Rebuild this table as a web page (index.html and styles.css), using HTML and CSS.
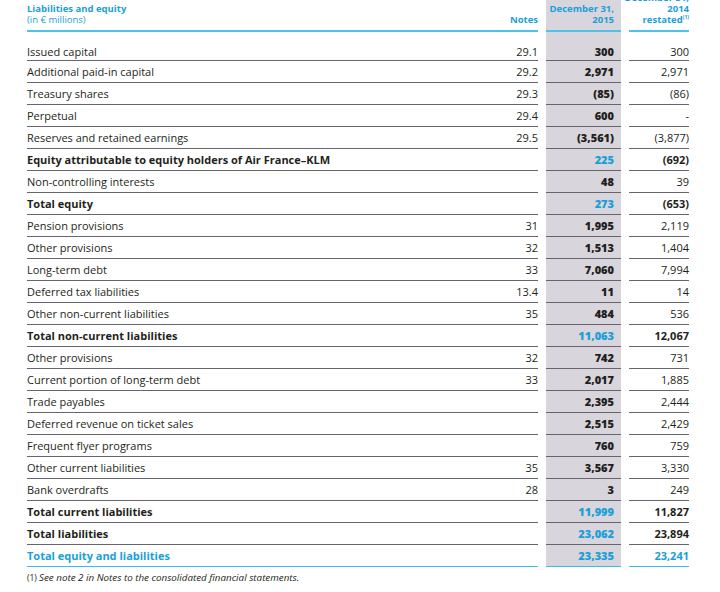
FILE: index.html
```html
<!DOCTYPE html>
<html>
<head>
<meta charset="utf-8">
<link rel="stylesheet" href="styles.css">
</head>
<body>
<div class="sheet">
  <div class="row head">
    <div class="c-label">
      <div class="title"><b>Liabilities and equity</b><br>(in € millions)</div>
      <span class="notes">Notes</span>
    </div>
    <div class="c-cur"><div class="stack">December 31,<br>2015</div></div>
    <div class="c-prev"><div class="stack">December 31,<br>2014<br>restated<sup>(1)</sup></div></div>
  </div>

  <div class="row first"><div class="c-label"><span>Issued capital</span><span class="notes">29.1</span></div><div class="c-cur">300</div><div class="c-prev">300</div></div>
  <div class="row"><div class="c-label"><span>Additional paid-in capital</span><span class="notes">29.2</span></div><div class="c-cur">2,971</div><div class="c-prev">2,971</div></div>
  <div class="row"><div class="c-label"><span>Treasury shares</span><span class="notes">29.3</span></div><div class="c-cur">(85)</div><div class="c-prev">(86)</div></div>
  <div class="row"><div class="c-label"><span>Perpetual</span><span class="notes">29.4</span></div><div class="c-cur">600</div><div class="c-prev">-</div></div>
  <div class="row"><div class="c-label"><span>Reserves and retained earnings</span><span class="notes">29.5</span></div><div class="c-cur">(3,561)</div><div class="c-prev">(3,877)</div></div>
  <div class="row total"><div class="c-label"><span>Equity attributable to equity holders of Air France–KLM</span><span class="notes"></span></div><div class="c-cur blue">225</div><div class="c-prev">(692)</div></div>
  <div class="row"><div class="c-label"><span>Non-controlling interests</span><span class="notes"></span></div><div class="c-cur">48</div><div class="c-prev">39</div></div>
  <div class="row total"><div class="c-label"><span>Total equity</span><span class="notes"></span></div><div class="c-cur blue">273</div><div class="c-prev">(653)</div></div>
  <div class="row"><div class="c-label"><span>Pension provisions</span><span class="notes">31</span></div><div class="c-cur">1,995</div><div class="c-prev">2,119</div></div>
  <div class="row"><div class="c-label"><span>Other provisions</span><span class="notes">32</span></div><div class="c-cur">1,513</div><div class="c-prev">1,404</div></div>
  <div class="row"><div class="c-label"><span>Long-term debt</span><span class="notes">33</span></div><div class="c-cur">7,060</div><div class="c-prev">7,994</div></div>
  <div class="row"><div class="c-label"><span>Deferred tax liabilities</span><span class="notes">13.4</span></div><div class="c-cur">11</div><div class="c-prev">14</div></div>
  <div class="row"><div class="c-label"><span>Other non-current liabilities</span><span class="notes">35</span></div><div class="c-cur">484</div><div class="c-prev">536</div></div>
  <div class="row total"><div class="c-label"><span>Total non-current liabilities</span><span class="notes"></span></div><div class="c-cur blue">11,063</div><div class="c-prev">12,067</div></div>
  <div class="row"><div class="c-label"><span>Other provisions</span><span class="notes">32</span></div><div class="c-cur">742</div><div class="c-prev">731</div></div>
  <div class="row"><div class="c-label"><span>Current portion of long-term debt</span><span class="notes">33</span></div><div class="c-cur">2,017</div><div class="c-prev">1,885</div></div>
  <div class="row"><div class="c-label"><span>Trade payables</span><span class="notes"></span></div><div class="c-cur">2,395</div><div class="c-prev">2,444</div></div>
  <div class="row"><div class="c-label"><span>Deferred revenue on ticket sales</span><span class="notes"></span></div><div class="c-cur">2,515</div><div class="c-prev">2,429</div></div>
  <div class="row"><div class="c-label"><span>Frequent flyer programs</span><span class="notes"></span></div><div class="c-cur">760</div><div class="c-prev">759</div></div>
  <div class="row"><div class="c-label"><span>Other current liabilities</span><span class="notes">35</span></div><div class="c-cur">3,567</div><div class="c-prev">3,330</div></div>
  <div class="row"><div class="c-label"><span>Bank overdrafts</span><span class="notes">28</span></div><div class="c-cur">3</div><div class="c-prev">249</div></div>
  <div class="row total"><div class="c-label"><span>Total current liabilities</span><span class="notes"></span></div><div class="c-cur blue">11,999</div><div class="c-prev">11,827</div></div>
  <div class="row total"><div class="c-label"><span>Total liabilities</span><span class="notes"></span></div><div class="c-cur blue">23,062</div><div class="c-prev">23,894</div></div>
  <div class="row total grand"><div class="c-label"><span>Total equity and liabilities</span><span class="notes"></span></div><div class="c-cur blue">23,335</div><div class="c-prev">23,241</div></div>

  <p class="foot"><span class="fn">(1)</span><i>See note 2 in Notes to the consolidated financial statements.</i></p>
</div>
</body>
</html>
```

FILE: styles.css
```css
* { box-sizing: border-box; }
html, body { margin: 0; padding: 0; background: #fff; }
body {
  font-family: "Open Sans", "DejaVu Sans", sans-serif;
  color: #231f20;
  font-size: 11px;
}
.sheet {
  width: 662px;
  margin-left: 27px;
  display: flex;
  flex-direction: column;
}
.row {
  display: grid;
  grid-template-columns: 511px 75px 60px;
  grid-template-rows: minmax(0, 1fr);
  column-gap: 8px;
  height: 22px;
  min-height: 0;
  flex: none;
}
.row > div {
  border-bottom: 1px solid #66656e;
  padding-top: 2px;
  line-height: 17px;
  white-space: nowrap;
  min-height: 0;
}
.c-label { display: flex; justify-content: space-between; }
.notes { text-align: right; }
.c-cur {
  background: #d8d5dc;
  text-align: right;
  padding-right: 7px;
  font-weight: 800;
}
.c-prev { text-align: right; }

.row.first { height: 29px; }
.row.first > div { padding-top: 11px; }

.row.total .c-label span:first-child,
.row.total .c-prev { font-weight: 700; }
.blue { color: #1a9fd8; }
.row.grand .c-label span:first-child,
.row.grand .c-prev { color: #1a9fd8; }
.row.grand > div { border-bottom-color: #3dbbe6; }

.row.head { height: 32px; }
.row.head > div {
  border-bottom: 2px solid #4cc3ea;
  padding: 0 0 5px 0;
  color: #1a9fd8;
  font-size: 9.5px;
  line-height: 11px;
  display: flex;
  align-items: flex-end;
}
.row.head .c-label { justify-content: space-between; }
.row.head .notes { font-weight: 700; }
.row.head .c-cur { justify-content: flex-end; padding-right: 7px; }
.row.head .c-prev { justify-content: flex-end; }
.stack { text-align: right; font-weight: 700; flex: none; }
.head sup { font-size: 5px; vertical-align: 4px; line-height: 0; }

.foot {
  margin: 5px 0 0 0;
  font-size: 9.8px;
  line-height: 12px;
  font-family: "Open Sans", sans-serif;
}
.foot .fn { display: inline-block; width: 12px; font-size: 8.5px; }
```
